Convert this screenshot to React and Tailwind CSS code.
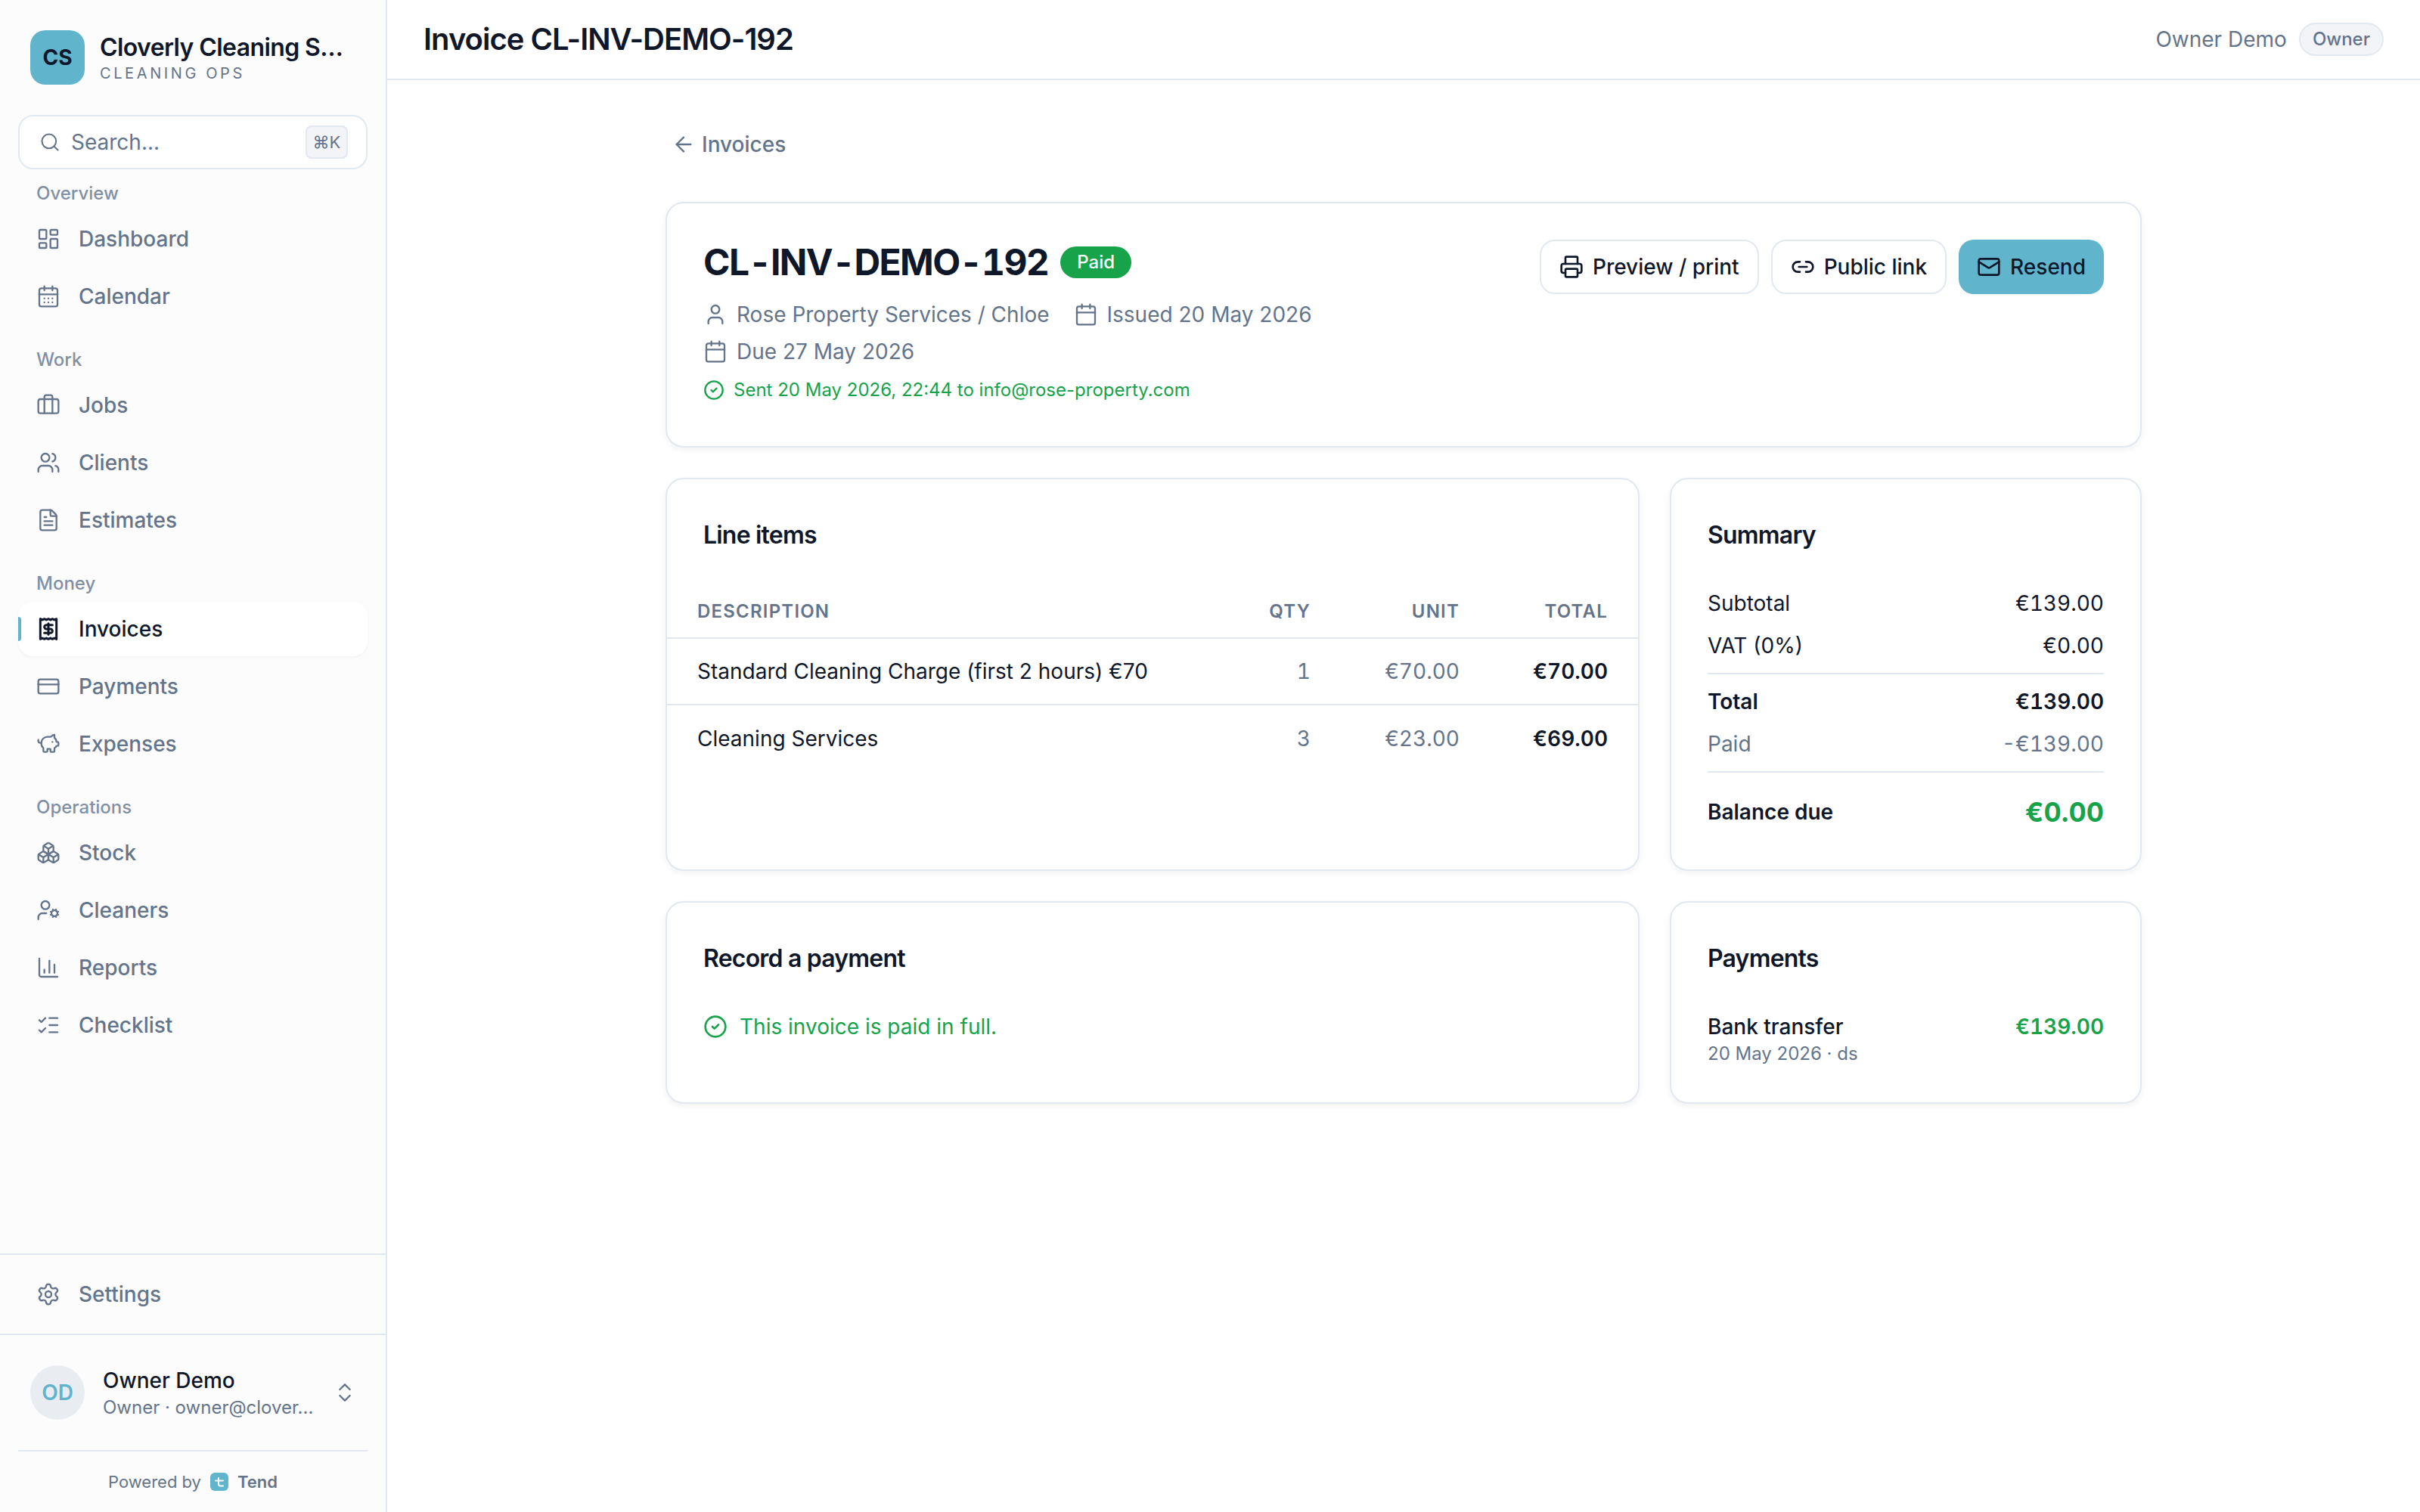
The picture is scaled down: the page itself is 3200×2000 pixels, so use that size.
import {
  ArrowLeft,
  Boxes,
  Briefcase,
  Calendar,
  CalendarDays,
  ChartColumn,
  ChevronsUpDown,
  CircleCheck,
  CreditCard,
  FileText,
  LayoutDashboard,
  Link2,
  ListChecks,
  Mail,
  PiggyBank,
  Printer,
  Receipt,
  Search,
  Settings,
  User,
  UserCog,
  Users,
} from 'lucide-react';

const navGroups = [
  { label: 'Overview', items: [{ name: 'Dashboard', icon: LayoutDashboard }, { name: 'Calendar', icon: CalendarDays }] },
  { label: 'Work', items: [{ name: 'Jobs', icon: Briefcase }, { name: 'Clients', icon: Users }, { name: 'Estimates', icon: FileText }] },
  { label: 'Money', items: [{ name: 'Invoices', icon: Receipt, active: true }, { name: 'Payments', icon: CreditCard }, { name: 'Expenses', icon: PiggyBank }] },
  { label: 'Operations', items: [{ name: 'Stock', icon: Boxes }, { name: 'Cleaners', icon: UserCog }, { name: 'Reports', icon: ChartColumn }, { name: 'Checklist', icon: ListChecks }] },
];

const lineItems = [
  { description: 'Standard Cleaning Charge (first 2 hours) €70', qty: 1, unit: '€70.00', total: '€70.00' },
  { description: 'Cleaning Services', qty: 3, unit: '€23.00', total: '€69.00' },
];

const NavItem = ({ item }) => {
  const Icon = item.icon;
  if (item.active) {
    return (
      <div className="relative flex h-[72px] items-center gap-[24px] rounded-[20px] bg-white pl-[24px] text-[28px] font-medium text-[#0f172a] shadow-[0_2px_4px_rgba(15,23,42,0.04)]">
        <span className="absolute left-0 top-[20px] h-[32px] w-[4px] rounded-r-[4px] bg-[#60b5cd]" />
        <Icon size={32} strokeWidth={2.25} />
        {item.name}
      </div>
    );
  }
  return (
    <div className="flex h-[72px] items-center gap-[24px] pl-[24px] text-[28px] font-medium text-[#64748b]">
      <Icon size={32} strokeWidth={1.75} />
      {item.name}
    </div>
  );
};

const Sidebar = () => (
  <aside className="flex h-full w-[512px] shrink-0 flex-col border-r-2 border-[#e2e8f0] bg-[#fcfcfd]">
    <div className="flex items-center gap-[20px] pl-[40px] pr-[48px] pt-[40px]">
      <div className="flex h-[72px] w-[72px] shrink-0 items-center justify-center rounded-[20px] bg-[#60b5cd] text-[28px] font-bold text-[#0f172a]">CS</div>
      <div className="min-w-0 flex-1 pt-[2px]">
        <div className="truncate text-[32px] font-semibold leading-[40px] tracking-[-0.6px] text-[#0f172a]">Cloverly Cleaning Services</div>
        <div className="text-[20px] font-normal uppercase leading-[28px] tracking-[3.6px] text-[#64748b]">Cleaning Ops</div>
      </div>
    </div>

    <div className="mx-[24px] mt-[40px] flex h-[72px] items-center rounded-[20px] border-2 border-[#e2e8f0] bg-white pl-[26px] pr-[24px]">
      <Search size={28} strokeWidth={1.75} className="text-[#64748b]" />
      <span className="ml-[14px] flex-1 text-[28px] text-[#64748b]">Search...</span>
      <span className="flex h-[44px] w-[56px] items-center justify-center rounded-[8px] border-2 border-[#e2e8f0] bg-[#f3f4f7] text-[22px] font-normal text-[#64748b]">⌘K</span>
    </div>

    <nav className="mt-[8px] flex flex-col gap-[24px] px-[24px]">
      {navGroups.map((group) => (
        <div key={group.label}>
          <div className="flex h-[48px] items-center pl-[24px] text-[24px] font-medium text-[#8290a5]">{group.label}</div>
          <div className="flex flex-col gap-[4px]">
            {group.items.map((item) => <NavItem key={item.name} item={item} />)}
          </div>
        </div>
      ))}
    </nav>

    <div className="mt-auto border-t-2 border-[#e2e8f0] px-[24px] py-[16px]">
      <NavItem item={{ name: 'Settings', icon: Settings }} />
    </div>
    <div className="flex items-center border-t-2 border-[#e2e8f0] px-[40px] py-[40px]">
      <div className="flex h-[72px] w-[72px] shrink-0 items-center justify-center rounded-full bg-[#e9edf2] text-[28px] font-semibold text-[#60b5cd]">OD</div>
      <div className="ml-[24px] min-w-0 flex-1 pt-[2px]">
        <div className="text-[28px] font-medium leading-[36px] text-[#0f172a]">Owner Demo</div>
        <div className="mt-[2px] truncate text-[24px] leading-[32px] text-[#64748b]">Owner · owner@clover...</div>
      </div>
      <ChevronsUpDown size={32} strokeWidth={1.75} className="-mr-[2px] ml-[16px] shrink-0 text-[#64748b]" />
    </div>
    <div className="mx-[24px] flex h-[82px] items-center justify-center border-t-2 border-[#e2e8f0] text-[22px] text-[#64748b]">
      Powered by
      <span className="ml-[12px] flex h-[24px] w-[24px] items-center justify-center rounded-[6px] bg-[#60b5cd]">
        <svg viewBox="0 0 24 24" className="h-[24px] w-[24px]" fill="none" stroke="#fff" strokeWidth="2" strokeLinecap="round">
          <path d="M7 10.5h10M11 7v8a2.5 2.5 0 0 0 2.5 2.5H17" />
        </svg>
      </span>
      <span className="ml-[12px] font-semibold">Tend</span>
    </div>
  </aside>
);

const Card = ({ className, children }) => (
  <section className={`rounded-[24px] border-2 border-[#e2e8f0] bg-white shadow-[0_3px_8px_rgba(15,23,42,0.06)] ${className}`}>{children}</section>
);

const CardTitle = ({ children }) => (
  <h2 className="text-[32px] font-semibold leading-[48px] tracking-[-0.8px] text-[#0f172a]">{children}</h2>
);

const ActionButton = ({ icon: Icon, children, primary }) => (
  <button
    className={
      primary
        ? 'flex h-[72px] items-center gap-[12px] rounded-[20px] bg-[#60b5cd] px-[24px] text-[28px] font-medium text-[#0f172a]'
        : 'flex h-[72px] items-center gap-[12px] rounded-[20px] border-2 border-[#e2e8f0] bg-white px-[24px] text-[28px] font-medium text-[#0f172a]'
    }
  >
    <Icon size={32} strokeWidth={2} />
    {children}
  </button>
);

const SummaryRow = ({ label, value, className }) => (
  <div className={`flex h-[40px] items-center justify-between text-[28px] ${className}`}>
    <span>{label}</span>
    <span className="tabular-nums">{value}</span>
  </div>
);

const App = () => {
  return (
    <div className="flex h-[2000px] bg-white font-[Inter,sans-serif] text-[#0f172a]">
      <Sidebar />
      <div className="flex min-w-0 flex-1 flex-col">
        <header className="flex h-[106px] shrink-0 items-center justify-between border-b-2 border-[#e2e8f0] pl-[48px] pr-[48px]">
          <h1 className="text-[40px] font-semibold tracking-[-1px] text-[#0f172a]">Invoice CL-INV-DEMO-192</h1>
          <div className="flex items-center gap-[16px]">
            <span className="text-[28px] text-[#64748b]">Owner Demo</span>
            <span className="flex h-[44px] items-center rounded-full border-2 border-[#e2e8f0] bg-[#f3f4f7] px-[16px] text-[24px] font-medium text-[#64748b]">Owner</span>
          </div>
        </header>

        <main className="mx-auto w-[1952px] pt-[65px]">
          <div className="flex h-[40px] items-center gap-[8px] pl-[8px] text-[28px] font-medium text-[#64748b]">
            <ArrowLeft size={32} strokeWidth={1.75} />
            Invoices
          </div>

          <Card className="mt-[56px] flex justify-between px-[48px] pb-[58px] pt-[48px]">
            <div>
              <div className="flex h-[60px] items-center gap-[16px]">
                <h2 className="text-[48px] font-bold tracking-[-1.6px] tabular-nums text-[#0f172a]">CL-INV-DEMO-192</h2>
                <span className="flex h-[42px] items-center rounded-full bg-[#16a34a] px-[22px] text-[24px] font-medium text-white">Paid</span>
              </div>
              <div className="mt-[19px] flex h-[40px] items-center text-[28px] text-[#64748b]">
                <User size={32} strokeWidth={1.75} />
                <span className="ml-[12px]">Rose Property Services / Chloe</span>
                <Calendar size={32} strokeWidth={1.75} className="ml-[32px]" />
                <span className="ml-[12px]">Issued 20 May 2026</span>
              </div>
              <div className="mt-[9px] flex h-[40px] items-center text-[28px] text-[#64748b]">
                <Calendar size={32} strokeWidth={1.75} />
                <span className="ml-[12px]">Due 27 May 2026</span>
              </div>
              <div className="mt-[15px] flex h-[32px] items-center text-[24px] text-[#16a34a]">
                <CircleCheck size={28} strokeWidth={2} />
                <span className="ml-[12px]">Sent 20 May 2026, 22:44 to info@rose-property.com</span>
              </div>
            </div>
            <div className="flex items-start gap-[16px]">
              <ActionButton icon={Printer}>Preview / print</ActionButton>
              <ActionButton icon={Link2}>Public link</ActionButton>
              <ActionButton icon={Mail} primary>Resend</ActionButton>
            </div>
          </Card>

          <div className="mt-[40px] grid grid-cols-[1fr_624px] gap-[40px]">
            <Card>
              <div className="px-[48px] pt-[50px]"><CardTitle>Line items</CardTitle></div>
              <table className="mt-[42px] w-full table-fixed border-collapse">
                <thead>
                  <tr className="h-[70px] border-b-2 border-[#e2e8f0] text-[24px] font-semibold uppercase tracking-[1.2px] text-[#64748b]">
                    <th className="pl-[40px] text-left font-semibold">Description</th>
                    <th className="w-[160px] pr-[40px] text-right font-semibold">Qty</th>
                    <th className="w-[197px] pr-[40px] text-right font-semibold">Unit</th>
                    <th className="w-[196px] pr-[40px] text-right font-semibold">Total</th>
                  </tr>
                </thead>
                <tbody>
                  {lineItems.map((row, i) => (
                    <tr key={row.description} className={i === 0 ? 'h-[88px] border-b-2 border-[#e2e8f0] text-[28px]' : 'h-[88px] text-[28px]'}>
                      <td className="pl-[40px] text-[#0f172a]">{row.description}</td>
                      <td className="pr-[40px] text-right tabular-nums text-[#64748b]">{row.qty}</td>
                      <td className="pr-[40px] text-right tabular-nums text-[#64748b]">{row.unit}</td>
                      <td className="pr-[40px] text-right font-semibold tabular-nums text-[#0f172a]">{row.total}</td>
                    </tr>
                  ))}
                </tbody>
              </table>
            </Card>

            <Card className="px-[48px] pb-[48px] pt-[50px]">
              <CardTitle>Summary</CardTitle>
              <div className="mt-[46px] flex flex-col gap-[16px]">
                <SummaryRow label="Subtotal" value="€139.00" />
                <SummaryRow label="VAT (0%)" value="€0.00" />
              </div>
              <div className="mt-[16px] flex flex-col gap-[16px] border-t-2 border-[#e2e8f0] pt-[16px]">
                <SummaryRow label="Total" value="€139.00" className="font-semibold" />
                <SummaryRow label="Paid" value="-€139.00" className="text-[#64748b]" />
              </div>
              <div className="mt-[16px] flex h-[82px] items-center justify-between border-t-2 border-[#e2e8f0] pt-[24px]">
                <span className="text-[28px] font-semibold">Balance due</span>
                <span className="text-[36px] font-bold tabular-nums text-[#16a34a]">€0.00</span>
              </div>
            </Card>

            <Card className="px-[48px] pb-[48px] pt-[50px]">
              <CardTitle>Record a payment</CardTitle>
              <div className="mt-[46px] flex h-[40px] items-center gap-[16px] text-[28px] text-[#16a34a]">
                <CircleCheck size={32} strokeWidth={2} />
                This invoice is paid in full.
              </div>
            </Card>

            <Card className="px-[48px] pb-[48px] pt-[50px]">
              <CardTitle>Payments</CardTitle>
              <div className="mt-[46px] flex items-start justify-between">
                <div>
                  <div className="text-[28px] font-medium leading-[40px]">Bank transfer</div>
                  <div className="text-[24px] leading-[32px] text-[#64748b]">20 May 2026 · ds</div>
                </div>
                <span className="text-[28px] font-semibold leading-[40px] tabular-nums text-[#16a34a]">€139.00</span>
              </div>
            </Card>
          </div>
        </main>
      </div>
    </div>
  );
};

export default App;
